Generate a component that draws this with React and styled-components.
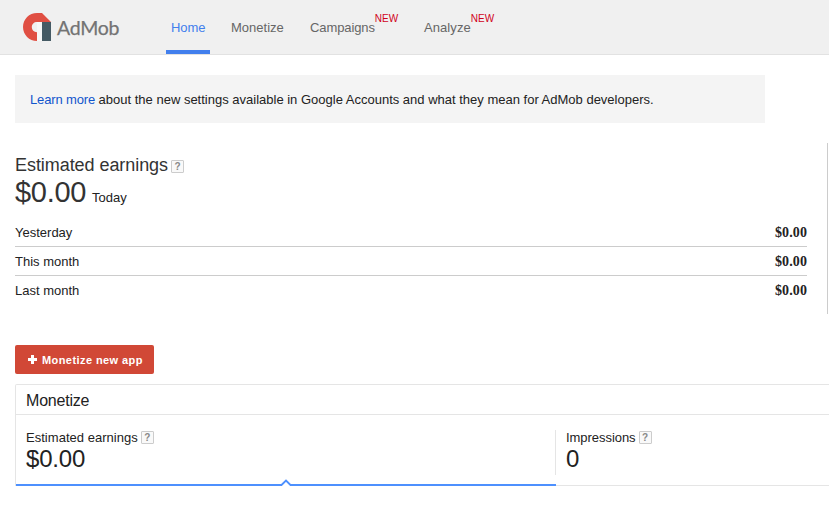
import React from "react";
import styled, { createGlobalStyle } from "styled-components";

const GlobalStyle = createGlobalStyle`
  * { box-sizing: border-box; }
  body {
    margin: 0;
    background: #fff;
    color: #222;
    font: 13px/16px "Liberation Sans", Arial, sans-serif;
    overflow: hidden;
  }
`;

const Page = styled.div`
  height: 508px;
  overflow: hidden;
`;

const Header = styled.header`
  display: flex;
  height: 55px;
  background: #f0f0f0;
  border-bottom: 1px solid #e2e2e2;
`;

const Brand = styled.div`
  display: flex;
  align-items: flex-start;
  width: 166px;
  padding: 13px 0 0 23px;
`;

const BrandName = styled.span`
  margin: 2px 0 0 6px;
  font: 19.5px/26px Lato, sans-serif;
  letter-spacing: -0.25px;
  color: #737373;
  -webkit-text-stroke: 0.25px #737373;
`;

const Nav = styled.nav`
  display: flex;
  gap: 16px;
`;

const NavItem = styled.a`
  display: flex;
  width: ${(p) => p.$width}px;
  height: 54px;
  padding: 20px 0 0 5px;
  white-space: nowrap;
  letter-spacing: ${(p) => p.$spacing || "0"};
  color: ${(p) => (p.$active ? "#427fed" : "#666")};
  border-bottom: 4px solid ${(p) => (p.$active ? "#427fed" : "transparent")};
`;

const NewTag = styled.sup`
  height: 12px;
  margin-top: -8px;
  font-size: 10px;
  line-height: 13px;
  letter-spacing: 0;
  color: #d0021b;
`;

const Notice = styled.div`
  width: 750px;
  height: 48px;
  margin: 20px 0 0 15px;
  padding: 17px 15px 0;
  background: #f4f4f4;
  white-space: nowrap;
`;

const Link = styled.a`
  color: #15c;
  letter-spacing: -0.15px;
`;

const Summary = styled.section`
  width: 813px;
  height: 171px;
  margin: 20px 0 0 15px;
  padding: 10px 20px 0 0;
  border-right: 1px solid #ccc;
`;

const SummaryTitle = styled.h2`
  display: flex;
  align-items: center;
  height: 24px;
  margin: 0;
  font-size: 18px;
  font-weight: 400;
  line-height: 24px;
  letter-spacing: -0.06px;
  color: #333;
`;

const Help = styled.span`
  display: inline-flex;
  justify-content: center;
  width: 13px;
  height: 13px;
  margin: ${(p) => (p.$raised ? "-2px 0 0 3px" : "2px 0 0 3px")};
  border: 1px solid #ccc;
  border-radius: 1px;
  background: #f9f9f9;
  color: #888;
  font-size: 10px;
  font-weight: 700;
  line-height: 12px;
  letter-spacing: 0;
`;

const Today = styled.div`
  display: flex;
  align-items: baseline;
  height: 42px;
  margin-top: -1px;
  gap: 6px;
  line-height: 32px;
`;

const TodayAmount = styled.span`
  font-size: 29px;
  letter-spacing: -0.3px;
  color: #333;
`;

const Row = styled.div`
  display: flex;
  justify-content: space-between;
  height: 29px;
  padding-top: 7px;
  border-bottom: ${(p) => (p.$last ? "0" : "1px solid #ccc")};
`;

const Amount = styled.b`
  font: bold 14px/16px "Liberation Serif", "Times New Roman", serif;
  letter-spacing: 0.1px;
`;

const Button = styled.button`
  display: flex;
  align-items: center;
  width: 139px;
  height: 29px;
  margin: 31px 0 0 15px;
  padding: 1px 0 0 13px;
  gap: 5px;
  border: 0;
  border-radius: 2px;
  background: #d14836;
  color: #fff;
  font: bold 11px/16px "Liberation Sans", Arial, sans-serif;
  white-space: nowrap;
  letter-spacing: 0.42px;
`;

const PlusIcon = styled.svg`
  flex: none;
  margin-top: -1px;
`;

const Panel = styled.section`
  width: 832px;
  height: 102px;
  margin: 10px 0 0 15px;
  border: 1px solid #e5e5e5;
  border-bottom: 0;
  border-radius: 2px 0 0 0;
`;

const PanelTitle = styled.h3`
  height: 30px;
  margin: 0;
  padding: 6px 10px 0;
  border-bottom: 1px solid #e5e5e5;
  font-size: 16px;
  font-weight: 400;
  line-height: 20px;
  letter-spacing: -0.2px;
`;

const Metrics = styled.div`
  display: flex;
  height: 71px;
`;

const Metric = styled.div`
  position: relative;
  flex: none;
  width: ${(p) => (p.$active ? "540px" : "290px")};
  padding: 15px 0 0;
  border-bottom: ${(p) => (p.$active ? "2px solid #4d90fe" : "1px solid #e5e5e5")};
`;

const MetricBody = styled.div`
  height: 45px;
  padding-left: 10px;
  border-right: ${(p) => (p.$divided ? "1px solid #e5e5e5" : "0")};
`;

const MetricLabel = styled.div`
  display: flex;
  align-items: center;
  height: 16px;
  letter-spacing: ${(p) => p.$spacing || "0.03px"};
`;

const MetricValue = styled.div`
  margin-top: -1px;
  font-size: 24px;
  line-height: 28px;
  letter-spacing: -0.2px;
`;

const Pointer = styled.svg`
  position: absolute;
  left: 264px;
  bottom: -2px;
`;

function Logo() {
  return (
    <svg width="28" height="28" viewBox="0 0 28 28">
      <path d="M14 28C6.2 28 0 21.8 0 14S6.2 0 14 0h5l9 9H14c-3 0-5.200 2.100-5.200 5s2.200 5.200 5.200 5.200z" fill="#e04f43" />
      <path d="M14 9h5v19h-5z" fill="#f7f7f7" />
      <path d="M19 9h9v19h-9z" fill="#455a64" />
    </svg>
  );
}

export default function App() {
  return (
    <Page>
      <GlobalStyle />
      <Header>
        <Brand>
          <Logo />
          <BrandName>AdMob</BrandName>
        </Brand>
        <Nav>
          <NavItem $active $width={44} $spacing="-0.1px">Home</NavItem>
          <NavItem $width={63}>Monetize</NavItem>
          <NavItem $width={98} $spacing="-0.1px">Campaigns<NewTag>NEW</NewTag></NavItem>
          <NavItem $width={80} $spacing="0.08px">Analyze<NewTag>NEW</NewTag></NavItem>
        </Nav>
      </Header>
      <Notice>
        <Link>Learn more</Link> about the new settings available in Google Accounts and what they mean for AdMob developers.
      </Notice>
      <Summary>
        <SummaryTitle>Estimated earnings<Help>?</Help></SummaryTitle>
        <Today><TodayAmount>$0.00</TodayAmount><span>Today</span></Today>
        <Row><span>Yesterday</span><Amount>$0.00</Amount></Row>
        <Row><span>This month</span><Amount>$0.00</Amount></Row>
        <Row $last><span>Last month</span><Amount>$0.00</Amount></Row>
      </Summary>
      <Button>
        <PlusIcon width="9" height="9" viewBox="0 0 9 9"><path d="M3 0h3v3h3v3H6v3H3V6H0V3h3z" fill="#fff" /></PlusIcon>
        Monetize new app
      </Button>
      <Panel>
        <PanelTitle>Monetize</PanelTitle>
        <Metrics>
          <Metric $active>
            <MetricBody $divided>
              <MetricLabel>Estimated earnings<Help $raised>?</Help></MetricLabel>
              <MetricValue>$0.00</MetricValue>
            </MetricBody>
            <Pointer width="12" height="8" viewBox="0 0 12 8">
              <path d="M0 8L1 6L6 1L11 6L12 8z" fill="#fff" />
              <path d="M0 7h1.500L6 2.500L10.500 7H12" fill="none" stroke="#4d90fe" strokeWidth="1.800" />
            </Pointer>
          </Metric>
          <Metric>
            <MetricBody>
              <MetricLabel $spacing="-0.05px">Impressions<Help $raised>?</Help></MetricLabel>
              <MetricValue>0</MetricValue>
            </MetricBody>
          </Metric>
        </Metrics>
      </Panel>
    </Page>
  );
}
